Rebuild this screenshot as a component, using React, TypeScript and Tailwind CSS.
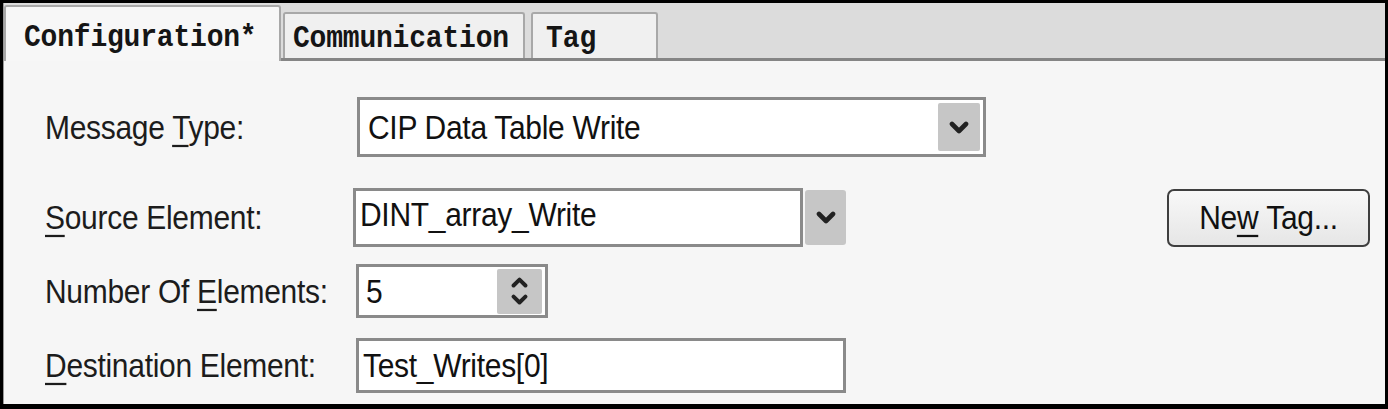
import React from "react";

const sans = { fontFamily: '"Liberation Sans", Arial, sans-serif' };
const mono = { fontFamily: '"Liberation Mono", "Courier New", monospace' };

function Chevron({ up = false, w = 20 }: { up?: boolean; w?: number }) {
    return (
        <svg width={w} height={w * 0.65} viewBox="0 0 20 13">
            <polyline
                points={up ? "3,10 10,3 17,10" : "3,3 10,10 17,3"}
                fill="none"
                stroke="#222"
                strokeWidth="4.6"
                strokeLinecap="round"
                strokeLinejoin="round"
            />
        </svg>
    );
}

function U({ children }: { children: React.ReactNode }) {
    return <span className="underline decoration-2 underline-offset-[5px]">{children}</span>;
}

// tall, slightly narrow text like the old dialog font
function T({ children, className = "" }: { children: React.ReactNode; className?: string }) {
    return (
        <span className={`inline-block scale-y-[1.12] text-[30px] tracking-[-0.3px] ${className}`} style={sans}>
            {children}
        </span>
    );
}

function Label({ children }: { children: React.ReactNode }) {
    return (
        <div className="w-[308px] shrink-0 text-[#1c1c1c]">
            <T>{children}</T>
        </div>
    );
}

export default function App() {
    return (
        <div className="w-[1388px] h-[409px] bg-black pt-[3px] pl-[3px] pr-[3px] pb-[5px] box-border">
            <div className="h-full w-full bg-[#f6f6f6] border-l border-[#9a9a9a] flex flex-col overflow-hidden">
                {/* tab strip */}
                <div className="h-[58px] shrink-0 bg-[#dcdcdc] border-b-[3px] border-[#858585] flex items-stretch box-border">
                    <div
                        className="w-[277px] mt-[2px] -mb-[3px] z-10 bg-[#f7f7f7] border-t-2 border-x-2 border-[#a8a8a8] rounded-t-[3px] flex items-center pl-[18px] pt-[8px] text-[28px] font-bold text-[#151515] tracking-[-0.2px]"
                        style={mono}
                    >
                        <span className="inline-block scale-y-[1.1]">Configuration*</span>
                    </div>
                    <div
                        className="w-[242px] mt-[9px] ml-[2px] bg-[#f0f0f0] border-t-2 border-x-2 border-[#a8a8a8] rounded-t-[3px] flex items-center pl-[8px] pt-[5px] text-[28px] font-bold text-[#151515] tracking-[-0.2px]"
                        style={mono}
                    >
                        <span className="inline-block scale-y-[1.1]">Communication</span>
                    </div>
                    <div
                        className="w-[127px] mt-[9px] ml-[6px] bg-[#f0f0f0] border-t-2 border-x-2 border-[#a8a8a8] rounded-t-[3px] flex items-center pl-[13px] pt-[5px] text-[28px] font-bold text-[#151515]"
                        style={mono}
                    >
                        <span className="inline-block scale-y-[1.1]">Tag</span>
                    </div>
                </div>

                {/* form */}
                <div className="flex flex-col pl-[41px]">
                    <div className="mt-[36px] h-[60px] flex items-center">
                        <Label>
                            Message <U>T</U>ype:
                        </Label>
                        <div className="ml-[4px] w-[629px] h-[60px] border-[3px] border-[#8a8a8a] bg-white flex items-center box-border">
                            <T className="pl-[8px] text-[#111]">CIP Data Table Write</T>
                            <div className="ml-auto mr-[3px] w-[42px] h-[48px] bg-[#c6c6c6] rounded-[2px] flex items-center justify-center">
                                <Chevron />
                            </div>
                        </div>
                    </div>

                    <div className="mt-[31px] h-[59px] flex items-center">
                        <Label>
                            <U>S</U>ource Element:
                        </Label>
                        <div className="w-[450px] h-[59px] border-[3px] border-[#8a8a8a] bg-white flex items-center box-border">
                            <T className="pl-[4px] -mt-[6px] text-[#111]">DINT_array_Write</T>
                        </div>
                        <div className="ml-[2px] w-[41px] h-[55px] bg-[#c6c6c6] rounded-[3px] flex items-center justify-center">
                            <Chevron />
                        </div>
                        <button className="ml-[321px] w-[203px] h-[58px] border-2 border-[#3f3f3f] rounded-[7px] bg-gradient-to-b from-[#f8f8f8] to-[#e6e6e6] text-[#111] flex items-center justify-center">
                            <T>
                                Ne<U>w</U>&nbsp;Tag...
                            </T>
                        </button>
                    </div>

                    <div className="mt-[17px] h-[54px] flex items-center">
                        <Label>
                            Number Of <U>E</U>lements:
                        </Label>
                        <div className="ml-[3px] w-[192px] h-[54px] border-[3px] border-[#8a8a8a] bg-white flex items-center box-border">
                            <T className="pl-[7px] text-[#111]">5</T>
                            <div className="ml-auto mr-[3px] w-[45px] h-[45px] bg-[#c6c6c6] rounded-[2px] flex flex-col items-center justify-center gap-[6px]">
                                <Chevron up w={17} />
                                <Chevron w={17} />
                            </div>
                        </div>
                    </div>

                    <div className="mt-[20px] h-[55px] flex items-center">
                        <Label>
                            <U>D</U>estination Element:
                        </Label>
                        <div className="ml-[3px] w-[490px] h-[55px] border-[3px] border-[#8a8a8a] bg-white flex items-center box-border">
                            <T className="pl-[4px] text-[#111]">Test_Writes[0]</T>
                        </div>
                    </div>
                </div>
            </div>
        </div>
    );
}
